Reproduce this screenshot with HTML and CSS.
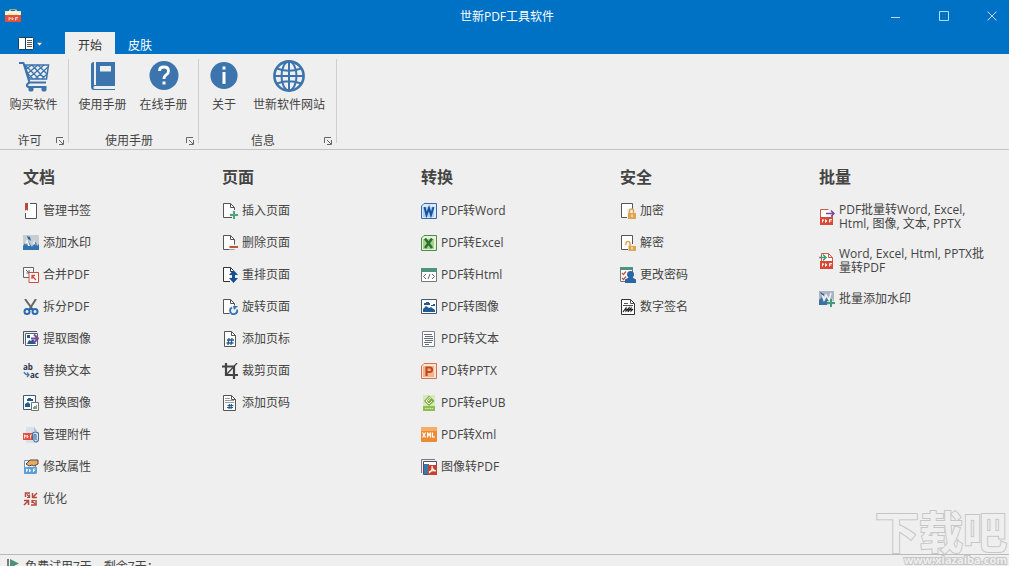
FILE: index.html
```html
<!DOCTYPE html>
<html lang="zh-CN">
<head>
<meta charset="utf-8">
<title>世新PDF工具软件</title>
<link rel="stylesheet" href="styles.css">
</head>
<body>
<div class="app">
  <header class="titlebar">
    <svg class="logo" width="16" height="16" viewBox="0 0 16 16"><path d="M5 3V1.500h6V3" fill="none" stroke="#a8a48c" stroke-width="1.200"/><path d="M0 3h16v5H0z" fill="#fbe9a4"/><path d="M1 7l4-4 3 3 3-3 4 4" fill="none" stroke="#fffbe6" stroke-width="1.500"/><path d="M0 7h16v7H0z" fill="#e0503c"/><path d="M4 12.500V9.500q3 0 .5 2M7 9.500v2.500q3-1 0-2.500M10.500 12.500v-3h2.500M11 11h1.500" fill="none" stroke="#fbd9d2" stroke-width=".9"/></svg>
    <h1 class="title">世新PDF工具软件</h1>
    <div class="window-controls">
      <button class="window-button" aria-label="最小化"><svg width="11" height="11" viewBox="0 0 11 11"><path d="M0 6.500h9"/></svg></button>
      <button class="window-button" aria-label="最大化"><svg width="11" height="11" viewBox="0 0 11 11"><path d="M.5.500h9v9h-9z"/></svg></button>
      <button class="window-button" aria-label="关闭"><svg width="11" height="11" viewBox="0 0 11 11"><path d="M.5.500l9 9M9.500.500l-9 9"/></svg></button>
    </div>
  </header>

  <nav class="tabs">
    <button class="app-menu" aria-label="菜单"><svg width="25" height="13" viewBox="0 0 25 13"><rect x=".5" y=".5" width="15" height="12" rx="1" fill="#fff" stroke="#173f63"/><path d="M7.500 1v11" stroke="#173f63"/><path d="M9 3.500h5M9 5.500h5M9 7.500h5M9 9.500h5" stroke="#555"/><path d="M18.500 5.500h6l-3 3.500z" fill="#fff" stroke="#17537f" stroke-width=".5"/></svg></button>
    <button class="tab tab-active">开始</button>
    <button class="tab">皮肤</button>
  </nav>

  <section class="ribbon">
    <div class="group">
      <div class="group-buttons">
        <button class="tool"><svg width="32" height="32" viewBox="0 0 32 32" fill="none" stroke="#3c74ae"><path d="M1 3h4.500l6 19.500h16.500" stroke-width="2"/><path d="M11.500 22.500c-4 2-3 4.500 0 4.500h17" stroke-width="2"/><path d="M7 5h23.500l-2 14H11z" stroke-width="1.500"/><path d="M8 6l13 13M14 5l12 13M20 5l9 9M26 5L11 18M30 7L17 19M20 5l-11 9M14 5l-6 4M29 14l-5 5M8 12l7 7" stroke-width="1.300"/><circle cx="13" cy="29" r="2.600" fill="#3c74ae" stroke="none"/><circle cx="26" cy="29" r="2.600" fill="#3c74ae" stroke="none"/></svg><span>购买软件</span></button>
      </div>
      <div class="group-caption"><span class="caption-text">许可</span><button class="launcher" aria-label="许可选项"><svg width="8" height="8" viewBox="0 0 8 8"><path d="M.5 6V.5H7M3 3l4 4M7.500 3v4.500H3"/></svg></button></div>
    </div>
    <div class="group">
      <div class="group-buttons">
        <button class="tool"><svg width="32" height="32" viewBox="0 0 32 32"><path d="M7 2Q4 2 4 5v22q0 3 3 3h21v-1H8q-1.500 0-1.500-1.500T8 26h20V2H9v23H7z" fill="#3c74ae"/><path d="M13 6h11v5.500H13z" fill="#efefef"/></svg><span>使用手册</span></button>
        <button class="tool"><svg width="32" height="32" viewBox="0 0 32 32"><circle cx="16" cy="15.500" r="14.500" fill="#3c74ae"/><path d="M11.500 11q0-4 4.500-4t4.500 4q0 2.500-2.300 3.900t-2.200 4.100" fill="none" stroke="#fff" stroke-width="2.800"/><path d="M14.500 21.500h3v3h-3z" fill="#fff"/></svg><span>在线手册</span></button>
      </div>
      <div class="group-caption"><span class="caption-text">使用手册</span><button class="launcher" aria-label="使用手册选项"><svg width="8" height="8" viewBox="0 0 8 8"><path d="M.5 6V.5H7M3 3l4 4M7.500 3v4.500H3"/></svg></button></div>
    </div>
    <div class="group">
      <div class="group-buttons">
        <button class="tool tool-narrow"><svg width="32" height="32" viewBox="0 0 32 32"><circle cx="16" cy="15.500" r="13.600" fill="#3c74ae"/><path d="M14.500 6.500h3v3h-3zM14.500 12h3v12h-3z" fill="#fff"/></svg><span>关于</span></button>
        <button class="tool tool-wide"><svg width="32" height="32" viewBox="0 0 32 32" fill="none" stroke="#3c74ae" stroke-width="2.600"><circle cx="16" cy="16" r="14.600"/><ellipse cx="16" cy="16" rx="7.500" ry="14.500" stroke-width="2"/><path d="M16 1v30M1 16h30M4 8.500q12 4.500 24 0M4 23.500q12-4.500 24 0" stroke-width="2"/></svg><span>世新软件网站</span></button>
      </div>
      <div class="group-caption"><span class="caption-text">信息</span><button class="launcher" aria-label="信息选项"><svg width="8" height="8" viewBox="0 0 8 8"><path d="M.5 6V.5H7M3 3l4 4M7.500 3v4.500H3"/></svg></button></div>
    </div>
  </section>

  <main class="columns">
    <section class="column">
      <h2 class="heading">文档</h2>
      <button class="item"><svg class="icon" viewBox="0 0 16 16"><path d="M7 .5h6.500v15h-11V10" fill="#fff" stroke="#555"/><path d="M5 1v14h8V1z" fill="#fff"/><path d="M2 0h3v8L3.500 6.500 2 8z" fill="#b84a3a"/></svg><span>管理书签</span></button>
      <button class="item"><svg class="icon" viewBox="0 0 16 16"><path d="M0 0h16v15H0z" fill="#c9cdd2"/><path d="M0 15V11l2-3 1 2 2-4 2 3 2 3 2-4 2-1 1 4 2-2v6z" fill="#3473ae"/><path d="M4 4l-2 5 2-1 1 3 2 0zM11 5l-1 5 2-1 1 2z" fill="#f1f6fa"/><path d="M4 1l3 1 1 4-3-2z" fill="#2d659c"/></svg><span>添加水印</span></button>
      <button class="item"><svg class="icon" viewBox="0 0 16 16" fill="none"><path d="M.5.500h10v10H.500z" fill="#f7f7f7" stroke="#666"/><path d="M6 5.500h9.500v10H6z" fill="#fff" stroke="#cf4a3f"/><path d="M3 3l3 3M3.500 6H6V3" stroke="#666"/><path d="M13 13l-4-4M9 12V8.500h3" stroke="#cf4a3f" stroke-width="1.300"/></svg><span>合并PDF</span></button>
      <button class="item"><svg class="icon" viewBox="0 0 16 16" fill="none"><path d="M2 0l8 11M13 0L6 11" stroke="#666" stroke-width="2"/><circle cx="4" cy="12.500" r="2.500" stroke="#2b6aaf" stroke-width="2"/><circle cx="12" cy="12.500" r="2.500" stroke="#2b6aaf" stroke-width="2"/><path d="M6 10h4" stroke="#2b6aaf" stroke-width="2"/></svg><span>拆分PDF</span></button>
      <button class="item"><svg class="icon" viewBox="0 0 16 16" fill="none"><path d="M.5 13V.500H14" stroke="#555"/><path d="M2.500 2.500h12v12h-12z" fill="#fff" stroke="#54657a"/><path d="M4 13l2-4 2 1 2-2 3 5z" fill="#245a92"/><path d="M4 4h3v3H4z" fill="#245a92"/><path d="M8 7.500h7M11 3.500l4 4-4 4" stroke="#7b4a9b" stroke-width="2"/></svg><span>提取图像</span></button>
      <button class="item"><svg class="icon" viewBox="0 0 16 16"><text class="icon-letters" x="0" y="7">ab</text><text class="icon-letters" x="7" y="15">ac</text><path d="M1 9q1 3 5 3M4 9.500l2 2.500-2 2" fill="none" stroke="#3c78b5" stroke-width="1.300"/></svg><span>替换文本</span></button>
      <button class="item"><svg class="icon" viewBox="0 0 16 16" fill="none"><path d="M.5.500h12v14H.500z" fill="#fff" stroke="#47566c"/><path d="M2 12V9l3-2 2 2v3zM5 3h3v1h2v2H4V4h1z" fill="#235a94"/><path d="M8.500 7.500h7v8h-7z" fill="#fff" stroke="#6d747b"/><path d="M10 14v-2h1v-1h2v-1h1v4z" fill="#7da471"/></svg><span>替换图像</span></button>
      <button class="item"><svg class="icon" viewBox="0 0 16 16" fill="none"><path d="M3 0h8l3 4v12H3z" fill="#d9e0e8"/><path d="M11 0v4h3" fill="#b3c0cf"/><path d="M0 6h10v7H0z" fill="#e4503e"/><path d="M1.500 11.500V8q2 0 .5 2M4 8v3q2-1 0-3M7.500 11.500V8H9" stroke="#fff" stroke-width=".8"/><path d="M9.500 13V7.500q0-2.500 3-2.500t3 2.500V12q0 3-2.500 3T11 12V8.500q0-1 1-1t1 1V13" stroke="#416c9e" stroke-width="1.100"/></svg><span>管理附件</span></button>
      <button class="item"><svg class="icon" viewBox="0 0 16 16" fill="none"><path d="M1.500 1.500h11v13h-11z" fill="#f4f8fc" stroke="#6695c2"/><path d="M3 5l4-4h8v4l-4 2-2-1-3 1z" fill="#e6aa63" stroke="#594635"/><path d="M1 8h13v6.500H1z" fill="#5b9fdb"/><path d="M3.500 13v-3q2 0 .5 2M6.500 10v3q2-1.500 0-3M10.500 13v-3h2M10.500 11.500h1.500" stroke="#fff" stroke-width=".9"/></svg><span>修改属性</span></button>
      <button class="item"><svg class="icon" viewBox="0 0 16 16" fill="none" stroke="#b5473b" stroke-width="1.500"><path d="M7 2H2.500v4M13 9v5H8"/><path d="M14 2l-4 4M9.500 2v4.500H14M1 14l4-4M1 9.500h4.500V14"/><path d="M12 13l-3-3M9 12V9.500h3M4 3.500l2.500 2.500M6.500 3.500V6.500H4" stroke-width="1.200"/></svg><span>优化</span></button>
    </section>

    <section class="column">
      <h2 class="heading">页面</h2>
      <button class="item"><svg class="icon" viewBox="0 0 16 16"><path d="M1.500.500h7l4 4v10h-11z" fill="#fff" stroke="#555"/><path d="M8.500.500v4h4" fill="none" stroke="#555"/><path d="M12 7v9M7 12h8" stroke="#efefef" stroke-width="4"/><path d="M12 8v8M8 12h8" stroke="#49a780" stroke-width="2"/></svg><span>插入页面</span></button>
      <button class="item"><svg class="icon" viewBox="0 0 16 16"><path d="M1.500.500h7l4 4v10h-11z" fill="#fff" stroke="#555"/><path d="M8.500.500v4h4" fill="none" stroke="#555"/><path d="M7 12h9" stroke="#efefef" stroke-width="5"/><path d="M7.500 12H16" stroke="#c4533b" stroke-width="2"/></svg><span>删除页面</span></button>
      <button class="item"><svg class="icon" viewBox="0 0 16 16"><path d="M1.500.500h7l4 4v10h-11z" fill="#fff" stroke="#333"/><path d="M8 3h6v13H8z" fill="#efefef"/><path d="M8.500.500v4h3" fill="none" stroke="#333"/><path d="M11.500 3l4.500 5h-3v3h3l-4.500 5L7 11h3V8H7z" fill="#164e93"/></svg><span>重排页面</span></button>
      <button class="item"><svg class="icon" viewBox="0 0 16 16"><path d="M1.500.500h7l4 4v10h-11z" fill="#fff" stroke="#555"/><path d="M8.500.500v4h4" fill="none" stroke="#555"/><circle cx="11.500" cy="11.500" r="5" fill="#efefef"/><path d="M10 8.500a3.500 3.500 0 1 0 5 2" fill="none" stroke="#3475b7" stroke-width="1.800"/><path d="M11 7h5l-4 4z" fill="#3475b7"/></svg><span>旋转页面</span></button>
      <button class="item"><svg class="icon" viewBox="0 0 16 16"><path d="M2.500.500h7l4 4v11h-11z" fill="#fff" stroke="#555"/><path d="M9.500.500v4h4" fill="none" stroke="#555"/><path d="M7 7l-1 7M10 7l-1 7M5 9h7M4.500 12h7" stroke="#285b92" stroke-width="1.300"/></svg><span>添加页标</span></button>
      <button class="item"><svg class="icon" viewBox="0 0 16 16" fill="none"><path d="M4 0v12h12M0 3.500h12V16" stroke="#444" stroke-width="2.200"/><path d="M15 0L5 11" stroke="#444" stroke-width="1.300"/></svg><span>裁剪页面</span></button>
      <button class="item"><svg class="icon" viewBox="0 0 16 16"><path d="M1.500.500h8l4 4v11h-12z" fill="#fff" stroke="#555"/><path d="M9.500.500v4h4" fill="none" stroke="#555"/><path d="M3 3.500h5M3 5.500h9M3 7.500h9" stroke="#999"/><path d="M7.500 9L7 14M9.500 9L9 14M5.500 10.500h6M5 12.500h6" stroke="#285b92" stroke-width="1.200"/></svg><span>添加页码</span></button>
    </section>

    <section class="column">
      <h2 class="heading">转换</h2>
      <button class="item"><svg class="icon" viewBox="0 0 16 16"><path d="M3 .5h12.500v15H.500V3z" fill="#dceaf9" stroke="#3668a5"/><path d="M2 4h11v10H2z" fill="#b0cdee"/><path d="M3.500 4l2 8 2.500-7 2 7 2.500-8" fill="none" stroke="#1754a0" stroke-width="2"/></svg><span>PDF转Word</span></button>
      <button class="item"><svg class="icon" viewBox="0 0 16 16"><path d="M3 .5h12.500v15H.500V3z" fill="#e5f2d9" stroke="#4e8a4a"/><path d="M2 4h11v10H2z" fill="#a8d289"/><path d="M4 3.500l7 9.500M11 3.500L4 13" stroke="#287332" stroke-width="2.500"/></svg><span>PDF转Excel</span></button>
      <button class="item"><svg class="icon" viewBox="0 0 16 16"><path d="M.5 1.500h15v13H.500z" fill="#fff" stroke="#777"/><path d="M0 1h16v4H0z" fill="#4f927d"/><path d="M5 7L2.500 9.500 5 12M11 7l2.500 2.500L11 12M9 7l-2 5" fill="none" stroke="#666"/></svg><span>PDF转Html</span></button>
      <button class="item"><svg class="icon" viewBox="0 0 16 16"><path d="M.5.500h15v14H.500z" fill="#fff" stroke="#48596e"/><path d="M2 13v-3l3-3 3 2 2-1 4 3v2zM3 4h2V3h3v1h1v2H3zM10 6h2V5h2v2h-4z" fill="#215c99"/></svg><span>PDF转图像</span></button>
      <button class="item"><svg class="icon" viewBox="0 0 16 16"><path d="M1.500.500h12v15h-12z" fill="#fff" stroke="#7a8491"/><path d="M3 3.500h8M4 5.500h8M3 7.500h9M4 9.500h8M3 11.500h8M4 13.500h4" stroke="#626b75"/></svg><span>PDF转文本</span></button>
      <button class="item"><svg class="icon" viewBox="0 0 16 16"><path d="M3 .5h12.500v15H.500V3z" fill="#fce3d4" stroke="#cf7551"/><path d="M2 3h11v11H2z" fill="#f3b58e"/><path d="M5.500 13V4.500h3q2.500 0 2.500 2.300T8.500 9h-3" fill="none" stroke="#c34820" stroke-width="2.200"/></svg><span>PD转PPTX</span></button>
      <button class="item"><svg class="icon" viewBox="0 0 16 16"><path d="M2 0h12v16H2z" fill="#d6e8bd"/><path d="M8 .5l5.500 5.500L8 11 3 6z" fill="#7fae3f"/><path d="M10 3.500L8 2.500 5 6l3 3 3-3M6.500 6L9 4.500" fill="none" stroke="#f2f8e8"/><path d="M2 11h12v5H2z" fill="#90bd4f"/><path d="M4 13.500h8" stroke="#d6e8bd" stroke-dasharray="1.500 .7"/></svg><span>PDF转ePUB</span></button>
      <button class="item"><svg class="icon" viewBox="0 0 16 16"><rect width="16" height="15" rx="1" fill="#ed8b35"/><path d="M0 1q0-1 1-1h14q1 0 1 1v3H0z" fill="#f5ad67"/><path d="M1.500 5.500l3 5M4.500 5.500l-3 5M6.500 10.500v-5L8 8.500l1.500-3v5M11.500 5.500V10H14" fill="none" stroke="#fff" stroke-width="1.200"/></svg><span>PDF转Xml</span></button>
      <button class="item"><svg class="icon" viewBox="0 0 16 16"><path d="M.5 14V.500H14" fill="none" stroke="#7b7881"/><path d="M2.500 2.500h13v13h-13z" fill="#fff" stroke="#534b68"/><path d="M3 5h5v10H3z" fill="#3c77aa"/><path d="M7 6h9v10H7z" fill="#c9402c"/><path d="M11 7q1 4-3 7M11 7q0 4 4 5-4-1-7 1" fill="none" stroke="#fff" stroke-width="1.200"/></svg><span>图像转PDF</span></button>
    </section>

    <section class="column">
      <h2 class="heading">安全</h2>
      <button class="item"><svg class="icon" viewBox="0 0 16 16"><path d="M1.500.500h11v14h-11z" fill="#fff" stroke="#555"/><path d="M7 6h9v10H7z" fill="#efefef"/><path d="M9.500 10V8q0-2 2-2t2 2v2" fill="none" stroke="#dda54f" stroke-width="1.500"/><path d="M8 10h8v6H8z" fill="#dda54f"/><path d="M12 11.500v2.500" stroke="#fff"/></svg><span>加密</span></button>
      <button class="item"><svg class="icon" viewBox="0 0 16 16"><path d="M1.500.500h11v14h-11z" fill="#fff" stroke="#555"/><path d="M8 9h8v7H8z" fill="#efefef"/><path d="M6 10V8.500q0-2 2-2t2 2V11" fill="none" stroke="#dda54f" stroke-width="1.500"/><path d="M8.500 11H16v5H8.500z" fill="#dda54f"/><path d="M12 12v2.500" stroke="#fff"/></svg><span>解密</span></button>
      <button class="item"><svg class="icon" viewBox="0 0 16 16"><path d="M.5.500h12v14H.500z" fill="#fff" stroke="#777"/><path d="M0 0h13v3H0z" fill="#4f927d"/><path d="M2 6l1.500 1.500L6 4.500M2 11l1.500 1.500L6 9.500" fill="none" stroke="#bf5542" stroke-width="1.300"/><path d="M10.500 4Q14 4 14 7.500q0 2-1.500 3l3.500 2V16H5v-3.500l3.500-2Q7 9.500 7 7.500 7 4 10.500 4z" fill="#2a65a6"/></svg><span>更改密码</span></button>
      <button class="item"><svg class="icon" viewBox="0 0 16 16"><path d="M1.500.500h9l4 4v11h-13z" fill="#fff" stroke="#333"/><path d="M10.500.500v4h4M4 4.500h4M3 6.500h10" fill="none" stroke="#555"/><path d="M3 13l3-4v3l3-3-1 4 3-4v3l2-2" fill="none" stroke="#222" stroke-width="1.200"/></svg><span>数字签名</span></button>
    </section>

    <section class="column">
      <h2 class="heading">批量</h2>
      <button class="item"><svg class="icon" viewBox="0 0 16 16"><path d="M1.500 8V.500h8M13.500 6v10" fill="#fff" stroke="#cf5a48"/><path d="M2 1h7l4 4v4H2z" fill="#fff"/><path d="M7 4.500h8M12 1.500l3 3-3 3" fill="none" stroke="#7549a0" stroke-width="1.500"/><path d="M1 8h13v8H1z" fill="#da4838"/><path d="M3.500 13.500v-3q2 0 .5 1.500M6.500 10.500v3q3-1.500 0-3M10.500 13.500v-3H13M10.500 12h2" fill="none" stroke="#fff" stroke-width=".9"/></svg><span>PDF批量转Word, Excel, Html, 图像, 文本, PPTX</span></button>
      <button class="item"><svg class="icon" viewBox="0 0 16 16"><path d="M2.500 8V.500h7l4 4v11" fill="#fff" stroke="#cf5a48"/><path d="M9.500.500v4h4" fill="none" stroke="#cf5a48"/><path d="M0 4.500h6M4 1.500l3 3-3 3" fill="none" stroke="#409d77" stroke-width="1.500"/><path d="M1 8h13v8H1z" fill="#da4838"/><path d="M3.500 13.500v-3q2 0 .5 1.500M6.500 10.500v3q3-1.500 0-3M10.500 13.500v-3H13M10.500 12h2" fill="none" stroke="#fff" stroke-width=".9"/></svg><span>Word, Excel, Html, PPTX批量转PDF</span></button>
      <button class="item"><svg class="icon" viewBox="0 0 16 16"><path d="M0 0h15v14H0z" fill="#abb5c1"/><path d="M0 14V9l3-3 1 3 2 1 2-4 3 4 3-2v6z" fill="#3d70a3"/><path d="M3 2l2 7 2-5 3 5 2-7" fill="none" stroke="#eef3f7" stroke-width="1.500"/><path d="M1 1l4 2v2L2 3z" fill="#315f91"/><path d="M12 8v8M8 12h8" stroke="#efefef" stroke-width="3.500"/><path d="M12 8v8M8 12h8" stroke="#409d77" stroke-width="2"/></svg><span>批量添加水印</span></button>
    </section>
  </main>

  <footer class="statusbar">
    <svg width="12" height="16" viewBox="0 0 12 16"><path d="M1 0v16" stroke="#555" stroke-width="1.500"/><path d="M3 0l9 4.500L3 9z" fill="#4b947b"/></svg>
    <span>免费试用7天，剩余7天：</span>
  </footer>
  <div class="watermark"><span class="watermark-name">下载吧</span><span class="watermark-site">www.xiazaiba.com</span></div>
</div>
</body>
</html>
```
FILE: styles.css
```css
* {
  box-sizing: border-box;
}

html {
  overflow: hidden;
}

body {
  margin: 0;
  overflow: hidden;
  background: #efefef;
  color: #444;
  font: 12px/14px "Open Sans", "Noto Sans", "Noto Sans CJK SC", sans-serif;
}

button {
  margin: 0;
  padding: 0;
  border: 0;
  background: none;
  color: inherit;
  font: inherit;
}

svg {
  display: block;
  flex: none;
}

.app {
  position: relative;
  display: flex;
  flex-direction: column;
  height: calc(100vh + 12px);
}

.titlebar {
  display: grid;
  grid-template-columns: 1fr auto 1fr;
  align-items: center;
  height: 32px;
  padding-left: 5px;
  background: #0072c6;
  color: #fff;
}

.title {
  margin: 0;
  padding-top: 2px;
  font-size: 12px;
  font-weight: 400;
}

.window-controls {
  display: flex;
  justify-content: flex-end;
  gap: 14px;
}

.window-button {
  display: flex;
  align-items: center;
  justify-content: center;
  width: 34px;
  height: 32px;
}

.window-button svg {
  fill: none;
  stroke: #b5dcf5;
}

.tabs {
  display: flex;
  height: 22px;
  background: #0072c6;
  color: #fff;
}

.app-menu {
  display: flex;
  align-items: center;
  justify-content: center;
  width: 65px;
  padding-right: 4px;
}

.tab {
  width: 50px;
  padding-top: 6px;
}

.tab-active {
  background: #efefef;
  color: #333;
}

.ribbon {
  display: flex;
  height: 96px;
  padding-bottom: 1px;
  border-bottom: 1px solid #c3c3c3;
}

.group {
  display: flex;
  flex-direction: column;
  justify-content: space-between;
  margin-top: 5px;
  padding: 1px 5px 0 3px;
  background: linear-gradient(#cfcfcf, #cfcfcf) right top / 1px 84px no-repeat;
}

.group-buttons {
  display: flex;
}

.tool {
  display: flex;
  flex-direction: column;
  align-items: center;
  gap: 6px;
  width: 61px;
}

.tool-narrow {
  width: 44px;
}

.tool-wide {
  width: 86px;
}

.group-caption {
  display: flex;
  align-items: center;
}

.caption-text {
  flex: 1;
  text-align: center;
}

.launcher svg {
  fill: none;
  stroke: #666;
}

.columns {
  flex: 1;
  display: grid;
  grid-template-columns: repeat(5, 1fr);
  column-gap: 31px;
  padding: 17px 22px 0 23px;
}

.column {
  display: flex;
  flex-direction: column;
  align-items: flex-start;
  gap: 16px;
}

.heading {
  margin: 0;
  font-size: 16px;
  line-height: 20px;
  font-weight: 700;
}

.item {
  display: flex;
  align-items: center;
  gap: 4px;
  min-height: 16px;
  text-align: left;
}

.icon {
  width: 16px;
  height: 16px;
}

.icon-letters {
  fill: #2c3446;
  font-size: 8px;
  font-weight: 700;
}

.statusbar {
  display: flex;
  align-items: center;
  gap: 6px;
  height: 24px;
  padding-left: 7px;
  border-top: 1px solid #bbb;
}

.watermark {
  position: absolute;
  right: 2px;
  bottom: 12px;
  display: flex;
  flex-direction: column;
  align-items: flex-end;
  color: #efefef;
  font-weight: 700;
  paint-order: stroke fill;
  -webkit-text-stroke: 2px #c6c6c6;
}

.watermark-name {
  font-size: 44px;
  line-height: 44px;
}

.watermark-site {
  font-size: 11px;
  line-height: 12px;
}
```
